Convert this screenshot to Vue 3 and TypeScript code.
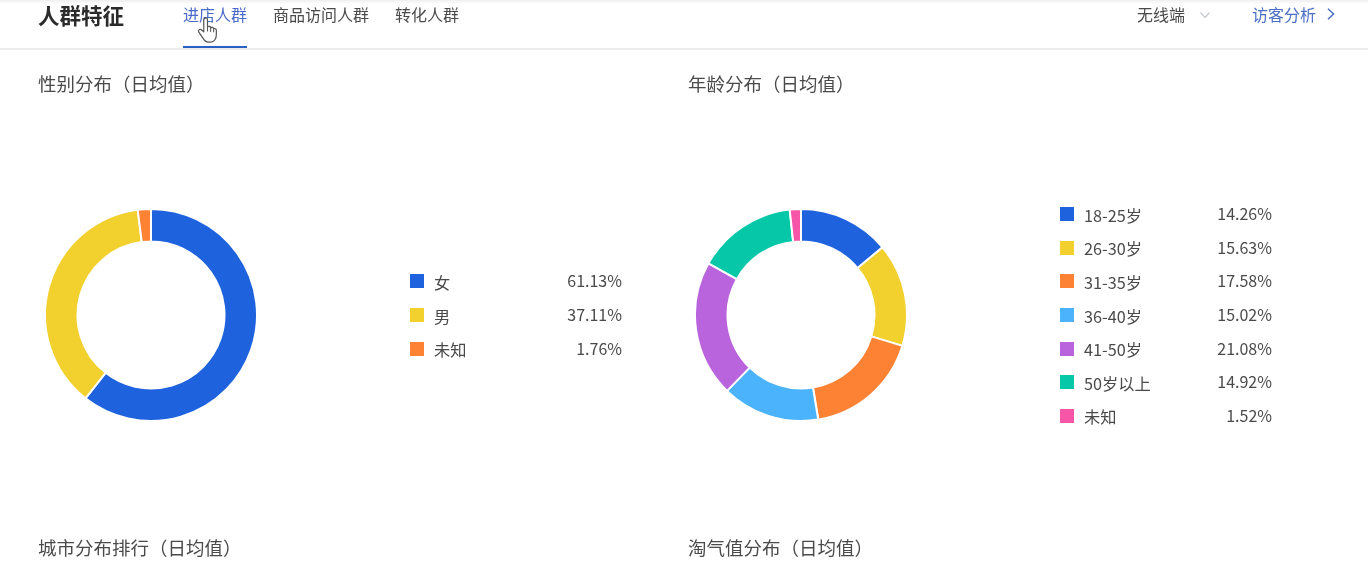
<script setup lang="ts">
interface Slice { label: string; value: number; arc: number; color: string }
interface Section { title: string; slices: Slice[] }

const colors = {
  blue: '#1e62de', yellow: '#f2d02e', orange: '#fd8233', sky: '#4ab3fb',
  purple: '#b963dd', teal: '#06c8a8', pink: '#f655a8',
}
const charts: Section[] = [
  { title: '性别分布（日均值）', slices: [
    { label: '女', value: 61.13, arc: 60.6, color: colors.blue },
    { label: '男', value: 37.11, arc: 37.4, color: colors.yellow },
    { label: '未知', value: 1.76, arc: 2.0, color: colors.orange },
  ] },
  { title: '年龄分布（日均值）', slices: [
    { label: '18-25岁', value: 14.26, arc: 13.97, color: colors.blue },
    { label: '26-30岁', value: 15.63, arc: 15.73, color: colors.yellow },
    { label: '31-35岁', value: 17.58, arc: 17.7, color: colors.orange },
    { label: '36-40岁', value: 15.02, arc: 14.9, color: colors.sky },
    { label: '41-50岁', value: 21.08, arc: 20.8, color: colors.purple },
    { label: '50岁以上', value: 14.92, arc: 15.2, color: colors.teal },
    { label: '未知', value: 1.52, arc: 1.7, color: colors.pink },
  ] },
]
const tabs = ['进店人群', '商品访问人群', '转化人群']
const lower = ['城市分布排行（日均值）', '淘气值分布（日均值）']

const OUTER = 106
const INNER = 73.5
const point = (r: number, pct: number) => {
  const a = (pct / 100) * Math.PI * 2
  return `${(110 + r * Math.sin(a)).toFixed(2)} ${(110 - r * Math.cos(a)).toFixed(2)}`
}
const arcs = (slices: Slice[]) => {
  const total = slices.reduce((s, x) => s + x.arc, 0)
  let run = 0
  return slices.map((s) => {
    const from = (run / total) * 100
    run += s.arc
    const to = (run / total) * 100
    const large = to - from > 50 ? 1 : 0
    return {
      color: s.color,
      d: `M${point(OUTER, from)}A${OUTER} ${OUTER} 0 ${large} 1 ${point(OUTER, to)}L${point(INNER, to)}A${INNER} ${INNER} 0 ${large} 0 ${point(INNER, from)}Z`,
    }
  })
}
</script>

<template>
  <div class="page">
    <header class="bar">
      <h1 class="brand">人群特征</h1>
      <nav class="tabs">
        <a v-for="(t, i) in tabs" :key="t" class="tab" :class="{ on: i === 0 }">
          {{ t }}
          <svg v-if="i === 0" class="hand" viewBox="0 0 22 28" width="21" height="26">
            <path d="M7 16V3a2 2 0 0 1 4 0v7.4c1.8-.8 3.2-.2 3.4 1 1.5-.7 3-.2 3.2 1.1 1.5-.4 2.9.3 2.9 1.9V19c0 4-2 8-6 8h-3c-3 0-4.2-2-6-5l-4-6c-1-2 1.6-3.4 3.2-2z" fill="#fff" stroke="#555" stroke-width="1.3" stroke-linejoin="round" />
            <path d="M11 10.5V15M14.4 11.4V15.5M17.6 12.5V16" fill="none" stroke="#555" stroke-width="1.1" stroke-linecap="round" />
          </svg>
        </a>
      </nav>
      <div class="side">
        <span class="device">无线端</span>
        <svg class="down" viewBox="0 0 10 6" width="10" height="6"><path d="M.5.5 5 5.5 9.5.5" fill="none" stroke="#c6c9ce" stroke-width="1.2" /></svg>
        <a class="link">访客分析</a>
        <svg class="next" viewBox="0 0 8 12" width="8" height="12"><path d="M1 .8 6.6 6 1 11.2" fill="none" stroke="#4a6fc4" stroke-width="1.5" /></svg>
      </div>
    </header>

    <main class="grid">
      <section v-for="c in charts" :key="c.title" class="panel">
        <h2 class="heading">{{ c.title }}</h2>
        <div class="chart">
          <svg class="donut" viewBox="0 0 220 220" width="220" height="220">
            <path v-for="a in arcs(c.slices)" :key="a.color" :d="a.d" :fill="a.color" stroke="#fff" stroke-width="2" />
          </svg>
          <ul class="legend">
            <li v-for="s in c.slices" :key="s.label" class="row">
              <i class="swatch" :style="{ background: s.color }"></i>
              <span class="name">{{ s.label }}</span>
              <span class="pct">{{ s.value.toFixed(2) }}%</span>
            </li>
          </ul>
        </div>
      </section>
      <section v-for="t in lower" :key="t" class="panel">
        <h2 class="heading">{{ t }}</h2>
      </section>
    </main>
  </div>
</template>

<style>
html, body { margin: 0; background: #fff; overflow: hidden; }
</style>

<style scoped>
.page {
  width: 1368px;
  height: 570px;
  overflow: hidden;
  background: #fff;
  color: #4a4a4a;
  font-family: "Noto Sans CJK SC", "Noto Sans", sans-serif;
  filter: blur(0.45px);
}
.bar {
  display: flex;
  align-items: flex-start;
  height: 48px;
  padding: 0 33px 0 38px;
  border-bottom: 2px solid #ececec;
  background: linear-gradient(#efefef, #fff 4px);
}
.brand {
  margin: 0 59px 0 0;
  font-size: 21.5px;
  line-height: 29px;
  font-weight: 700;
  color: #2b2b2b;
}
.tabs { display: flex; gap: 26px; }
.tab {
  position: relative;
  height: 46px;
  font-size: 16px;
  line-height: 29px;
  border-bottom: 2px solid transparent;
}
.tab.on { color: #4a6bc9; border-bottom-color: #2a5fc4; }
.hand { position: absolute; left: 14px; top: 17px; }
.side {
  display: flex;
  align-items: center;
  margin-left: auto;
  height: 28px;
  font-size: 16px;
}
.down { margin: 2px 42px 0 15px; }
.link { color: #4a6fc4; }
.next { margin-left: 11px; }
.grid {
  display: grid;
  grid-template-columns: 650px 650px;
  row-gap: 11px;
  padding: 19px 0 0 38px;
}
.heading {
  margin: 0;
  font-size: 18.5px;
  line-height: 28px;
  font-weight: 400;
  color: #4a4a4a;
}
.chart {
  display: flex;
  align-items: center;
  height: 414px;
  margin-top: 11px;
}
.donut { margin-left: 3px; flex: none; }
.legend {
  width: 212px;
  margin: 0 0 0 149px;
  padding: 0;
  list-style: none;
}
.row {
  display: flex;
  align-items: center;
  height: 33.67px;
  font-size: 16px;
}
.swatch { width: 14px; height: 14px; margin-right: 10px; flex: none; }
.name { position: relative; top: 0.5px; font-size: 16.25px; }
.pct { margin-left: auto; position: relative; top: -1px; }
</style>
